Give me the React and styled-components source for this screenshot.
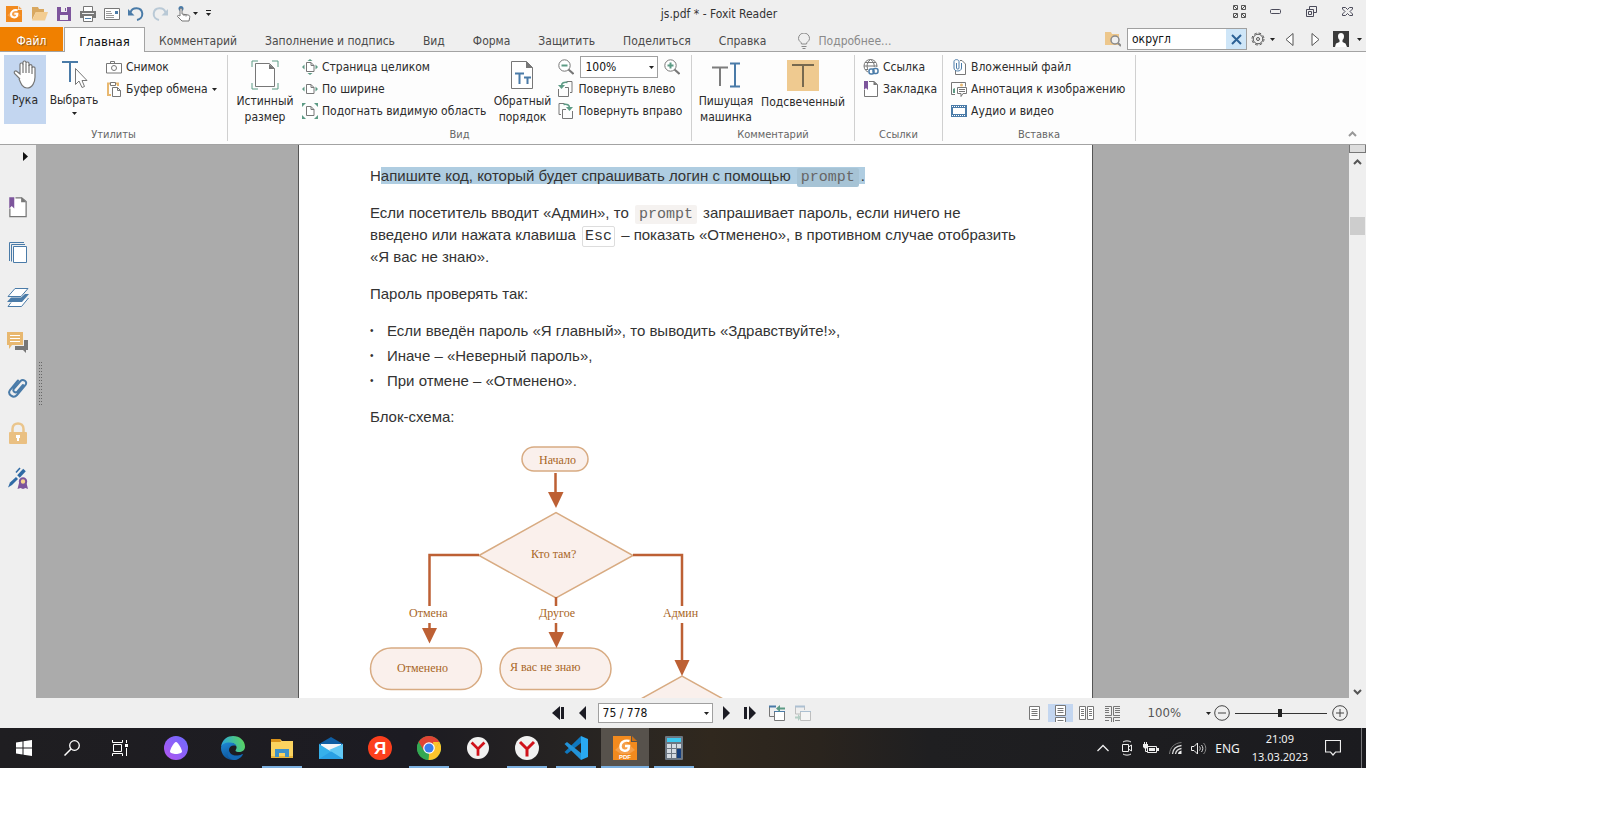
import React from "react";
import styled, { createGlobalStyle } from "styled-components";

const UI = '"DejaVu Sans Condensed", "DejaVu Sans", "Noto Sans", sans-serif';
const GRAY = "#7d7d7d";
const BLUE = "#4a7ba8";
const GREEN = "#5d9b85";
const SAND = "#e8b870";
const PURPLE = "#7d559c";

const Global = createGlobalStyle`
  * { box-sizing: border-box; }
  body { margin: 0; background: #fff; font-family: ${UI}; font-size: 12px; color: #333; }
  button, input, select { font: inherit; color: inherit; margin: 0; }
  button { background: none; border: 0; padding: 0; }
  svg { display: block; flex: none; }
`;

/* ---------- frame ---------- */

const Screen = styled.div`
  display: flex;
  flex-direction: column;
  height: calc(100vh - 64px);
  min-height: 400px;
  margin-right: 234px;
  background: #efefef;
`;

const TitleBar = styled.header`
  display: grid;
  grid-template-columns: 1fr auto 1fr;
  align-items: center;
  height: 27px;
  padding: 0 8px 0 6px;
`;

const QuickAccess = styled.div`
  display: flex;
  align-items: center;
  gap: 8px;
  > svg { margin-right: 2px; }
`;

const Title = styled.h1`
  margin: 0;
  padding-left: 74px;
  font-size: 12px;
  font-weight: 400;
  white-space: nowrap;
`;

const WindowControls = styled.div`
  display: flex;
  justify-content: flex-end;
  gap: 20px;
  padding: 0 3px 4px 0;
`;

const IconButton = styled.button`
  display: flex;
  align-items: center;
  justify-content: center;
  gap: ${(p) => p.$gap || 0}px;
  min-width: ${(p) => p.$w || 16}px;
  height: ${(p) => p.$h || 18}px;
  background: ${(p) => (p.$on ? "#c3d6f0" : "none")};
`;

/* ---------- tabs ---------- */

const TabRow = styled.nav`
  display: flex;
  align-items: stretch;
  height: 25px;
  border-bottom: 1px solid #a3a3a3;
`;

const FileTab = styled.button`
  width: 63px;
  margin-right: 1px;
  padding-top: 3px;
  background: #f08000;
  color: #fff;
  text-shadow: 1px 1px 1px #8a5a20;
`;

const Tab = styled.button`
  padding: 3px 14px 0;
  color: #4a4a4a;
  white-space: nowrap;
  ${(p) =>
    p.$active &&
    `
    width: 81px;
    height: 25px;
    padding: 2px 0 0;
    font-size: 13px;
    color: #111;
    background: #fdfdfd;
    border: 1px solid #a3a3a3;
    border-bottom: 0;
  `}
`;

const TellMe = styled.label`
  display: flex;
  align-items: center;
  gap: 8px;
  margin-left: 18px;
  padding-top: 3px;
  input {
    width: 96px;
    border: 0;
    padding: 0;
    outline: 0;
    background: none;
  }
  input::placeholder { color: #8a8a8a; opacity: 1; }
`;

const TabTools = styled.div`
  display: flex;
  align-items: center;
  gap: 2px;
  margin-left: auto;
  padding: 0 3px 0 0;
`;

const SearchBox = styled.div`
  display: flex;
  width: 120px;
  height: 22px;
  margin-left: 4px;
  border: 1px solid #a0a0a0;
  background: #fff;
  input {
    flex: 1;
    min-width: 0;
    padding: 0 0 0 4px;
    border: 0;
    outline: 0;
    background: none;
    color: #111;
  }
  button {
    display: flex;
    align-items: center;
    justify-content: center;
    width: 20px;
    background: #cfe6f8;
  }
`;

/* ---------- ribbon ---------- */

const Ribbon = styled.section`
  display: flex;
  height: 93px;
  padding-top: 3px;
  background: #fdfdfd;
  border-bottom: 1px solid #a3a3a3;
`;

const Group = styled.div`
  display: flex;
  flex-direction: column;
  width: ${(p) => p.$w}px;
  height: 86px;
  border-right: 1px solid #d0d0d0;
`;

const GroupBody = styled.div`
  display: flex;
  flex: none;
  height: 70px;
  padding-left: ${(p) => p.$pad || 4}px;
`;

const Caption = styled.div`
  padding-top: 1px;
  line-height: 18px;
  text-align: center;
  font-size: 11px;
  color: #666;
`;

const BigButton = styled.button`
  display: flex;
  flex-direction: column;
  align-items: center;
  width: ${(p) => p.$w}px;
  height: 69px;
  padding-top: 5px;
  line-height: 16px;
  background: ${(p) => (p.$on ? "#c3d6f0" : "none")};
  color: #2b2b2b;
  svg:first-child { margin-bottom: 3px; }
  svg + span + svg { margin-top: 4px; }
`;

const Stack = styled.div`
  display: flex;
  flex-direction: column;
  padding-top: 1px;
  margin-left: ${(p) => p.$ml || 0}px;
`;

const SmallButton = styled.button`
  display: flex;
  align-items: center;
  gap: 4px;
  height: 22px;
  color: #2b2b2b;
  white-space: nowrap;
`;

const ZoomRow = styled.div`
  display: flex;
  align-items: center;
  gap: 6px;
  height: 22px;
`;

const SelectWrap = styled.span`
  position: relative;
  display: flex;
  width: ${(p) => p.$w}px;
  height: ${(p) => p.$h}px;
  select {
    appearance: none;
    width: 100%;
    padding: 0 4px;
    border: 1px solid #a0a0a0;
    border-radius: 0;
    background: #fff;
    color: #111;
  }
  svg {
    position: absolute;
    right: 4px;
    top: 50%;
    margin-top: -1px;
    pointer-events: none;
  }
`;

const Collapse = styled(IconButton)`
  align-self: flex-end;
  margin: 0 6px 1px auto;
`;

/* ---------- workspace ---------- */

const Workspace = styled.main`
  display: flex;
  flex: 1;
  min-height: 0;
`;

const SideBar = styled.aside`
  display: flex;
  flex-direction: column;
  width: 36px;
`;

const Expand = styled(IconButton)`
  align-self: flex-end;
  margin: 1px 5px 19px 0;
`;

const Splitter = styled.div`
  display: flex;
  align-items: center;
  width: 6px;
  padding: 0 0 76px 3px;
`;

const Canvas = styled.div`
  display: flex;
  flex: 1;
  min-width: 0;
  overflow: hidden;
  background: #ababab;
`;

const PageArea = styled.div`
  display: flex;
  flex: 1;
  justify-content: center;
  min-width: 0;
`;

const Page = styled.article`
  width: 795px;
  padding: 20px 64px 0 71px;
  border: solid #555;
  border-width: 0 1px;
  background: #fff;
  font-family: "Liberation Sans", Arial, sans-serif;
  font-size: 15px;
  line-height: 22px;
  color: #333;
  p { margin: 0 0 15px; }
`;

const Code = styled.code`
  padding: 1px 4px;
  margin: 0 2px;
  border-radius: 2px;
  background: ${(p) => (p.$marked ? "#a6c3d5" : "#f5f2f0")};
  color: #666;
  font-family: "Liberation Mono", monospace;
  font-size: 15px;
  line-height: 1;
`;

const Key = styled.kbd`
  padding: 1px 2px;
  margin: 0 2px;
  border: 1px solid #ddd;
  border-radius: 2px;
  font-family: "Liberation Mono", monospace;
  font-size: 15px;
  line-height: 1;
`;

const Mark = styled.mark`
  background: #afcde1;
  color: inherit;
`;

const List = styled.ul`
  margin: 0 0 14px;
  padding: 0;
  list-style: none;
  li {
    display: flex;
    gap: 12px;
    margin-bottom: 3px;
    line-height: 22px;
  }
  li::before {
    content: "•";
    width: 5px;
    font-size: 10px;
  }
`;

const ScrollBar = styled.div`
  display: flex;
  flex-direction: column;
  width: 17px;
  background: #efefef;
`;

const SplitBox = styled.button`
  height: 8px;
  border: 1px solid #777;
  border-top: 0;
  background: #ddd;
`;

const Thumb = styled.div`
  height: 18px;
  margin: 46px 1px auto;
  background: #cdcdcd;
`;

/* ---------- status bar ---------- */

const StatusBar = styled.footer`
  display: flex;
  align-items: center;
  justify-content: flex-end;
  height: 30px;
  padding-right: 18px;
`;

const Pager = styled.div`
  display: flex;
  align-items: center;
  gap: 10px;
  margin-right: 211px;
`;

const ViewModes = styled.div`
  display: flex;
  align-items: center;
  gap: 1px;
`;

const ZoomValue = styled.output`
  margin: 0 21px 0 23px;
  font-size: 13px;
  line-height: 18px;
  color: #555;
`;

const Slider = styled.input`
  appearance: none;
  width: 92px;
  height: 12px;
  margin: 0 5px;
  background: linear-gradient(#333, #333) center / 100% 1px no-repeat;
  &::-webkit-slider-thumb {
    appearance: none;
    width: 4px;
    height: 8px;
    background: #222;
  }
`;

/* ---------- taskbar ---------- */

const TaskBar = styled.footer`
  display: flex;
  height: 40px;
  background: linear-gradient(90deg, #1f1e21 0%, #1c1b22 30%, #2a2622 46%, #30281e 52%, #2a241e 60%, #1f1f21 68%, #1b1b1f 100%);
  color: #f2f2f2;
`;

const TaskButton = styled.button`
  display: flex;
  align-items: center;
  justify-content: center;
  width: ${(p) => (p.$active ? 48 : 40)}px;
  margin-right: ${(p) => (p.$active ? 5 : 9)}px;
  margin-left: ${(p) => (p.$active ? -4 : 0)}px;
  border: solid ${(p) => (p.$open ? "#7cb0e0" : "transparent")};
  border-width: 0 0 2px;
  padding-top: 2px;
  background: ${(p) => (p.$active ? "#57524c" : "none")};
  background-clip: padding-box;
`;

const StartGroup = styled.div`
  display: flex;
  margin: 0 8px 0 4px;
  ${TaskButton} { margin-right: 8px; }
`;

const Alice = styled.div`
  display: flex;
  margin-right: 8px;
`;

const Tray = styled.div`
  display: flex;
  align-items: center;
  gap: 8px;
  margin-left: auto;
  padding-right: 4px;
  font-family: "Noto Sans", "Open Sans", sans-serif;
  font-size: 12px;
`;

const Clock = styled.time`
  margin: 0 1px 0 4px;
  text-align: center;
  line-height: 18px;
  font-size: 11px;
`;

const DesktopEdge = styled.div`
  align-self: stretch;
  width: 1px;
  margin-left: 4px;
  background: #77777a;
`;

/* ---------- icons ---------- */

const Svg = ({ w = 16, h, children, ...rest }) => (
  <svg width={w} height={h || w} viewBox={`0 0 ${w} ${h || w}`} fill="none" aria-hidden="true" {...rest}>
    {children}
  </svg>
);

const Caret = (props) => (
  <Svg w={5} h={3} {...props}>
    <path d="M0 0h5L2.500 3z" fill="#222" />
  </Svg>
);

const FoxitIcon = ({ size = 16, pdf }) => (
  <svg width={size} height={size} viewBox="0 0 24 24" fill="none" aria-hidden="true">
    <path d="M0 0h18v6h6v18H0z" fill="#f28a1e" />
    <path d="M19 0l5 5h-5z" fill={pdf ? "#c96f16" : "#f4a351"} />
    <path d="M2 14l10-9 10 9-6 4H8z" fill="#f6a04a" />
    <path d={pdf ? "M16.500 5C11 3.500 7.500 6.500 7.500 10.500c0 4.500 6 5.500 8 2.500l.5-3h-4" : "M17.500 6.500C11 5 7.500 8.500 7.500 12.500c0 5 6.500 6 9 2.500l.5-3.500h-4.500"} stroke="#fff" strokeWidth={pdf ? 2.400 : 3} />
    {pdf && (
      <text x="6" y="22.500" fontSize="6" fontWeight="700" fill="#fff" fontFamily="Liberation Sans, sans-serif">PDF</text>
    )}
  </svg>
);

const FolderIcon = () => (
  <Svg><path d="M0 14V1h6l1 2h5v3H4z" fill="#d9a860" /><path d="M4 6h12l-3 8.500H0z" fill="#f3cd92" /></Svg>
);
const SaveIcon = () => (
  <Svg w={14}><path d="M0 0h14v14H0z" fill={PURPLE} /><path d="M4 0h6v5H4zM3 8h8v5H3z" fill="#efefef" /><path d="M8 1h1v3H8z" fill={PURPLE} /></Svg>
);
const PrintIcon = () => (
  <Svg>
    <path d="M0 5h16v7H0z" fill="#777" />
    <path d="M3.500 5V.5h9V5M3.500 9.500h9v6h-9z" fill="#fff" stroke="#777" />
    <path d="M5 12.500h6" stroke={BLUE} /><path d="M2 7.500h12" stroke="#efefef" />
  </Svg>
);
const MailIcon = () => (
  <Svg w={16} h={12}><path d="M.5.5h15v11H.5z" fill="#fff" stroke="#777" /><path d="M2 3.500h5M2 5.500h6M2 7.500h8M2 9.500h8" stroke="#999" /><path d="M11 3h3v3h-3z" fill={BLUE} /></Svg>
);
const UndoIcon = ({ flip, color }) => (
  <Svg><g transform={flip ? "translate(16 0) scale(-1 1)" : undefined}>
    <path d="M2.500 6.500C4 1 13.500.5 14.300 7.500 14.500 11 12 13.500 9 14" stroke={color} strokeWidth="2" />
    <path d="M0 3v6.500h6.500z" fill={color} />
  </g></Svg>
);
const TouchIcon = () => (
  <Svg><circle cx="5" cy="2.500" r="2.500" fill={BLUE} /><path d="M4 10V3.500c0-1.500 2-1.500 2 0V8l6 1c1.500.3 2 1 1.700 2.500L13 15H6l-4.500-4.500C1 9.500 2.500 9 4 10zM8 8v2M10 8.500v2" fill="#fff" stroke="#777" /></Svg>
);
const OverflowIcon = () => (
  <Svg w={5} h={7}><path d="M0 .5h5" stroke="#222" /><path d="M0 3h5L2.500 6z" fill="#222" /></Svg>
);
const GridWindowIcon = () => (
  <Svg w={13} h={13} stroke="#555">
    <path d="M.5.5h4v4h-4zM8.500.5h4v4h-4zM.5 8.500h4v4h-4zM8.500 8.500h4v4h-4zM1 1l3 3M12 1L9 4M1 12l3-3M12 12L9 9" />
  </Svg>
);
const MinIcon = () => <Svg w={11} h={5}><rect x=".5" y=".5" width="10" height="4" rx="1" stroke="#4b4b5a" /></Svg>;
const RestoreIcon = () => (
  <Svg w={11} h={11} stroke="#4b4b5a"><path d="M3.500 3.500v-3h7v6h-3M.5 3.500h7v7h-7zM2.500 5.500h3v3h-3z" /></Svg>
);
const CloseIcon = () => (
  <Svg w={11} h={9} stroke="#4b4b5a"><path d="M.5.5h3l2 2 2-2h3v1.500L8 4.500l2.500 2.500v1.500h-3l-2-2-2 2h-3V7L3 4.500.5 2z" /></Svg>
);
const BulbIcon = () => (
  <Svg w={12} h={16} stroke="#888"><path d="M3.500 11C3.500 8.500.500 8.500.500 5.500a5.300 5.300 0 0 1 11 0c0 3-3 3-3 5.500zM3.500 13.500h5M4.500 15.500h3" /></Svg>
);
const FolderSearchIcon = () => (
  <Svg><path d="M0 1h6l1 2h7v11H0z" fill="#edc78c" /><circle cx="10" cy="9" r="4" fill="#efefef" stroke="#8a8a8a" strokeWidth="1.500" /><path d="M13 12l3 3" stroke="#8a8a8a" strokeWidth="2" /></Svg>
);
const GearIcon = () => (
  <Svg w={14} stroke="#555"><circle cx="7" cy="7" r="6" strokeDasharray="2.700 2" /><circle cx="7" cy="7" r="4.800" /><circle cx="7" cy="7" r="1.500" /></Svg>
);
const TriOutline = ({ flip }) => (
  <Svg w={9} h={13}><path d={flip ? "M1 .5v12l7-6z" : "M8 .5v12l-7-6z"} stroke="#555" fill="#fff" /></Svg>
);
const AvatarIcon = () => (
  <Svg><path d="M0 0h16v16H0z" fill="#3b3b3b" /><path d="M5 5c0-4 6-4 6 0 0 2-.5 3-1.500 4v2l3 1.500L14 16H2l1-3.500L6.500 11V9C5.500 8 5 7 5 5z" fill="#fff" /></Svg>
);

const HandIcon = () => (
  <Svg w={26} h={29}>
    <path d="M8 19L2.500 13.500c-1-2 1-3.500 2.500-2L8 14V4.500c0-2 3-2 3 0V2.500c0-2 3-2 3 0v1c0-2 3-2 3 0V6c0-1.800 3-1.800 3 0v2c0-1.500 3-1.500 3 0v9c0 5-2.500 11-8 11-4.500 0-6-4-8-9" fill="#fff" stroke="#777" strokeWidth="1.200" />
    <path d="M11 4v9M14 3.500V13M17 5v8M20 7.500V14" stroke="#777" strokeWidth="1.200" />
  </Svg>
);
const SelectTextIcon = () => (
  <Svg w={28} h={29}><path d="M2 2h16M10 2v20" stroke={BLUE} strokeWidth="2" /><path d="M15.500 8.500v16l3.500-3.500 3 6.500 2.500-1-2.500-6h5z" fill="#fff" stroke="#777" /></Svg>
);
const CameraIcon = () => (
  <Svg w={16} h={13}><path d="M4.500 2.500V.5h4v2M.5 2.500h15v9.500H.5z" fill="#fff" stroke="#777" /><circle cx="8" cy="7" r="2.500" stroke="#777" /></Svg>
);
const PasteIcon = () => (
  <Svg><path d="M5 14H2V2.500h10V5" stroke={SAND} strokeWidth="2" /><path d="M4.500 1.500h5v3h-5z" fill="#fff" stroke="#777" /><path d="M6.500 6.500h5l3 3v6h-8zM11.500 6.500v3h3" fill="#fff" stroke="#777" /></Svg>
);
const RealSizeIcon = () => (
  <Svg w={28} h={30}>
    <path d="M1 7V1h6M21 1h6v6M27 23v6h-6M7 29H1v-6" stroke={GREEN} />
    <path d="M4.500 3.500h14l5 5v18h-19z" fill="#fff" stroke="#777" /><path d="M18 4v5h6z" fill="#777" />
  </Svg>
);
const FitIcon = ({ kind }) => (
  <Svg>
    <path d="M4.500 3.500h4.500l3 3v6H4.500zM9 3.500v3h3" fill="#fff" stroke="#777" />
    {kind !== "all" && <path d="M2.500 5.500v5L0 8zM13.500 5.500v5L16 8z" fill={GREEN} />}
    {kind === "page" && <path d="M5.500 2h5L8 0zM5.500 14h5L8 16z" fill={GREEN} />}
    {kind === "all" && <path d="M0 0h4L0 4zM16 0v4l-4-4zM16 16h-4l4-4zM0 16v-4l4 4z" fill={GREEN} />}
  </Svg>
);
const ReflowIcon = () => (
  <Svg w={24} h={30}>
    <path d="M1.500 1.500h15l6 6v21h-21z" fill="#fff" stroke="#777" /><path d="M16 1v7h7z" fill="#777" />
    <path d="M5 13.500h9M9.500 13v11M14 17.500h7M17.500 17v7" stroke={BLUE} strokeWidth="2" />
  </Svg>
);
const ZoomIcon = ({ plus }) => (
  <Svg><circle cx="6.500" cy="6.500" r="5.700" fill="#fff" stroke="#777" /><path d={plus ? "M3.500 6.500h6M6.500 3.500v6" : "M3.500 6.500h6"} stroke={GREEN} strokeWidth="2" /><path d="M10.500 10.500l5 4.500" stroke="#777" strokeWidth="2" /></Svg>
);
const RotateIcon = ({ flip }) => (
  <Svg w={16} h={16}><g transform={flip ? "translate(15 0) scale(-1 1)" : undefined}>
    <path d="M8.500.5h5.500v11h-2M.5 8v7.500h10v-9H7" stroke="#777" />
    <path d="M9.500 1.500C6 .5 3.500 2 3.500 5" stroke={GREEN} strokeWidth="1.500" /><path d="M0 4h7L3.500 8z" fill={GREEN} />
  </g></Svg>
);
const TypewriterIcon = () => (
  <Svg w={28} h={30}><path d="M0 7.500h16M8 8v18" stroke={GRAY} strokeWidth="2" /><path d="M18 3.500h10M18 26.500h10M23 3v23" stroke={BLUE} strokeWidth="2" /></Svg>
);
const HighlightIcon = () => (
  <Svg w={32} h={31}><path d="M0 0h32v31H0z" fill="#efca90" /><path d="M5 5h22M16 5v22" stroke="#77694f" strokeWidth="2" /></Svg>
);
const LinkIcon = () => (
  <Svg>
    <circle cx="7.500" cy="7" r="6.500" stroke="#777" /><path d="M1 7h13M2 3.500h11M2 10.500h6M7.500.5c-5 4-4 10 0 13M7.500.5c4 3 4 6 3.500 9" stroke="#777" />
    <path d="M5 8h11v8H5z" fill="#fdfdfd" /><rect x="6" y="10" width="5" height="5" rx="2" stroke={BLUE} strokeWidth="1.500" /><rect x="10" y="9.500" width="5" height="5" rx="2" stroke={BLUE} strokeWidth="1.500" />
  </Svg>
);
const BookmarkIcon = ({ w = 16 }) => (
  <svg width={w} height={w * 1.125} viewBox="0 0 16 18" fill="none" aria-hidden="true">
    <path d="M1.500 10v6.500h13V4.500L11 1.500H6" fill="#fff" stroke="#777" /><path d="M10.500 1v4h4z" fill="#777" />
    <path d="M1 1h4v9L3 8l-2 2z" fill={PURPLE} />
  </svg>
);
const AttachIcon = () => (
  <Svg><path d="M9 1.500h2l3.500 3.500v10.500h-10V11" fill="#fff" stroke="#777" /><path d="M5.500 4v5c0 1.500 2.500 1.500 2.500 0V2.500c0-2.500-5-2.500-5 0V9c0 4 7.500 4 7.500 0V4" stroke={BLUE} /></Svg>
);
const ImageNoteIcon = () => (
  <Svg><path d="M.5 13.500V1.500h14v4M.5 13.500H4" stroke="#777" /><path d="M2 12V8l2-1v5z" fill={GREEN} /><circle cx="10.500" cy="4" r="1.500" fill={SAND} /><path d="M6.500 6.500h9v6H12l-2 3v-3H6.500zM8 8.500h6M8 10.500h6" fill="#fff" stroke="#777" /></Svg>
);
const FilmIcon = () => (
  <Svg w={16} h={12}><path d="M0 0h16v12H0z" fill={BLUE} /><path d="M2 3h12v6H2z" fill="#fff" /><path d="M1 1.500h14M1 10.500h14" stroke="#fff" strokeDasharray="1 1" /></Svg>
);
const ChevronUp = ({ color = "#999", flip }) => (
  <Svg w={9} h={6}><path d={flip ? "M1 1l3.500 3.500L8 1" : "M1 5l3.500-3.500L8 5"} stroke={color} strokeWidth="2" /></Svg>
);

const PagesIcon = () => (
  <Svg w={18} h={21} stroke={BLUE}><path d="M.5 19V.5H15M2.500 19.500v-17H16" /><path d="M4.500 4.500h13v16h-13z" fill="#fff" /></Svg>
);
const LayersIcon = () => (
  <Svg w={22} h={19}><path d="M4 14.500L1 18.500h13.500L21.500 10" fill="#fff" stroke={BLUE} /><path d="M4 9.500h10L18 6h4l-7 8H0z" fill={BLUE} /><path d="M8 .5h13L14 8.500H1z" fill="#fff" stroke={BLUE} /></Svg>
);
const CommentsIcon = () => (
  <Svg w={22} h={21}><path d="M17 8h4v10h-2v3l-3-3H8v-4h9z" fill="#777" /><path d="M0 0h16v13H5l-3 4v-4H0z" fill={SAND} /><path d="M3 3.500h10M3 6.500h10M3 9.500h10" stroke="#fff" /></Svg>
);
const ClipIcon = () => (
  <Svg w={20} h={21}><path d="M6 11.500L12.500 4C15 1.500 20 4.500 17.500 8L9 18c-3.500 4-10-.5-7-5L10 3.500M6 11.500c-2 3 1.500 5 3.500 3L15 8" stroke={BLUE} strokeWidth="2" strokeLinecap="round" /></Svg>
);
const LockIcon = () => (
  <Svg w={18} h={22}><path d="M3.500 11V7c0-7.500 11-7.500 11 0v4" stroke="#eac58c" strokeWidth="2.500" /><rect y="10" width="18" height="12" rx="1" fill="#eac082" /><path d="M7 13h4v3h-1v3H8v-3H7z" fill="#fff" /></Svg>
);
const SignIcon = () => (
  <Svg w={20} h={22}>
    <path d="M0 20.500l2-5 6-5.500 2 2-6 6z" fill="#2f6aa5" /><path d="M10.500 9.500l6-6.500" stroke="#2f6aa5" strokeWidth="3.500" /><path d="M8 5.500l4-4.500" stroke="#2f6aa5" strokeWidth="1.500" />
    <path d="M11 16l-1.500 6 3-1 2.500 1 2.500-1 2.500 1-1.500-6z" fill={PURPLE} /><circle cx="15" cy="14.500" r="3.200" fill="#f7d58c" stroke={PURPLE} strokeWidth="2" />
  </Svg>
);
const GripDots = () => (
  <Svg w={3} h={44} stroke="#666"><path d="M.5 0v44M2.500 0v44" strokeDasharray="1 2" /></Svg>
);

const Nav = ({ kind }) => {
  const w = kind === "prev" || kind === "next" ? 10 : 14;
  return (
    <Svg w={w} h={14} fill="#1c1c24">
      {kind === "first" && <path d="M9 0v14L1 7zM10 1h3v12h-3z" />}
      {kind === "prev" && <path d="M8 0v14L1 7z" />}
      {kind === "next" && <path d="M0 0v14l7-7z" />}
      {kind === "last" && <path d="M0 1h3v12H0zM5 0v14l7-7z" />}
    </Svg>
  );
};
const HistoryIcon = ({ back }) => (
  <Svg opacity={back ? 1 : 0.4}>
    <path d={back ? "M5 11.500H.5V1.500H7" : "M5 9H.5V1.500h9V5"} stroke="#777" /><path d={back ? "M0 1.500h7" : "M0 1.500h10"} stroke={BLUE} strokeWidth="2" />
    <path d="M5.500 6.500h10v9h-10z" fill="#fff" stroke="#777" /><path d="M5 6.500h11" stroke={BLUE} />
    <path d={back ? "M7 3.500L11 0v2.500h5v2h-5V7z" : "M6 12.500L3 9v2.500H0v2h3V16z"} fill={GREEN} />
  </Svg>
);
const ModeIcon = ({ kind }) => (
  <Svg w={kind > 2 ? 15 : 11} h={kind % 2 === 1 ? 14 : 17} stroke="#777">
    {kind === 1 && <path d="M.5.5h10v13H.5zM2.500 3.500h6M2.500 5.500h6M2.500 7.500h6M2.500 9.500h6" fill="#fff" />}
    {kind === 2 && <path d="M.5.5h10v10H.5zM2.500 3.500h6M2.500 5.500h6M2.500 7.500h6M.5 17v-4.500h10V17M2.500 15.500h6" fill="#fff" />}
    {kind === 3 && <path d="M.5.5h6v13h-6zM8.500.5h6v13h-6zM2 3.500h3M2 5.500h3M2 7.500h3M2 9.500h3M10 3.500h3M10 5.500h3M10 7.500h3M10 9.500h3" fill="#fff" />}
    {kind === 4 && <path d="M0 1.500h6.500v9H0M15 1.500H8.500v9H15M0 3.500h4M0 5.500h4M0 7.500h4M10 3.500h5M10 5.500h5M10 7.500h5M0 12.500h6.500V17M15 12.500H8.500V17M0 15.500h4M10 15.500h5" />}
  </Svg>
);
const RoundIcon = ({ plus }) => (
  <Svg><circle cx="8" cy="8" r="7.300" stroke="#444" /><path d={plus ? "M4 8h8M8 4v8" : "M4 8h8"} stroke="#444" /></Svg>
);

const WindowsIcon = () => <Svg><path d="M0 2.500L6.500 1.500V7.500H0zM7.500 1.300L16 0v7.500H7.500zM0 8.500h6.500v6L0 13.500zM7.500 8.500H16V16l-8.500-1.300z" fill="#fff" /></Svg>;
const LensIcon = () => <Svg stroke="#fff"><circle cx="10.500" cy="5.500" r="4.800" strokeWidth="1.300" /><path d="M7 9L.5 15.500" strokeWidth="1.500" /></Svg>;
const TaskViewIcon = () => (
  <Svg stroke="#fff"><path d="M.5 0v2.500h10V0M1.500 4.500h8v7h-8zM.5 16v-2.500h10V16M14.500 0v3M14.500 8v8" /><path d="M13 4h3v3h-3z" fill="#fff" stroke="none" /></Svg>
);
const AliceIcon = () => (
  <Svg w={24}>
    <defs><linearGradient id="alice" x1="1" y1="0" x2="0" y2="1"><stop stopColor="#6a6bff" /><stop offset="1" stopColor="#b455f0" /></linearGradient></defs>
    <circle cx="12" cy="12" r="12" fill="url(#alice)" /><path d="M12 6c2 0 6 7.500 6 9.500 0 3.300-12 3.300-12 0C6 13.500 10 6 12 6z" fill="#fff" />
  </Svg>
);
const EdgeIcon = () => (
  <Svg w={24}>
    <defs>
      <linearGradient id="edgeA" x1="0" y1="0.500" x2="1" y2="0.300"><stop stopColor="#2aa5e0" /><stop offset="1" stopColor="#5bd65c" /></linearGradient>
      <linearGradient id="edgeB" x1="0" y1="0" x2="0.500" y2="1"><stop stopColor="#1f8ad8" /><stop offset="1" stopColor="#0c4f93" /></linearGradient>
    </defs>
    <path d="M0 11C1 3 7 0 12 0c7 0 12 5 12 10.500 0 4-3 5.500-6 5.500-3.500 0-4-1.500-3-2.500 2-3-1-6.500-5.500-6.500C5 7 1 9 0 11z" fill="url(#edgeA)" />
    <path d="M0 12c0-3.500 4-5.500 8.500-5.500 4 0 6 1.500 7 3.500C11 8.500 8 11 8 14c0 4.500 6 7.500 14 4-2 4-6 6-10 6C5 24 0 18.500 0 12z" fill="url(#edgeB)" />
    <path d="M8 14c0 5 6 8 14 4-2 4-6 6-9 6-6-1-8-6-5-10z" fill="#1468b4" />
  </Svg>
);
const ExplorerIcon = () => (
  <Svg w={22} h={19}><path d="M0 0h9l2 2h11v17H0z" fill="#fbd35f" /><path d="M0 0h9l1 3H0z" fill="#d9921a" /><path d="M0 17h22v2H0z" fill="#e9b53a" /><path d="M4 10h14v8h-4v-4H8v4H4z" fill="#3f92c8" /></Svg>
);
const MailAppIcon = () => (
  <Svg w={24} h={22}><path d="M0 7l12-7 12 7v4H0z" fill="#0f5ea3" /><path d="M2 7h20v8H2z" fill="#f4f6f8" /><path d="M0 7l12 7.500L24 7v15H0z" fill="#36b0ea" /><path d="M24 7v15L10 13z" fill="#62c9f5" /><path d="M12 14.500L24 22H0z" fill="#2aa0e4" /></Svg>
);
const YandexIcon = () => (
  <Svg w={24}><circle cx="12" cy="12" r="12" fill="#fc3f1d" /><text x="12" y="18" textAnchor="middle" fontSize="17" fontWeight="700" fill="#fff" fontFamily="Liberation Sans, sans-serif">Я</text></Svg>
);
const ChromeIcon = () => (
  <Svg w={24}>
    <circle cx="12" cy="12" r="12" fill="#34a853" />
    <path d="M12 12L1.600 6A12 12 0 0 1 22.400 6z" fill="#e04434" /><path d="M12 12l10.400-6A12 12 0 0 1 11.500 24z" fill="#fbc52c" />
    <path d="M12 6h10.400L17 14zM1.600 6l5.200 9L12 6z" fill="#e04434" /><path d="M17.200 15l-5.700 9L22.400 6H16z" fill="#fbc52c" /><path d="M1.600 6L7 15l5 3-1 6A12 12 0 0 1 1.600 6z" fill="#34a853" />
    <circle cx="12" cy="12" r="5.800" fill="#fff" /><circle cx="12" cy="12" r="4.600" fill="#3b7ded" />
  </Svg>
);
const YaBrowserIcon = ({ size = 22 }) => (
  <svg width={size} height={size} viewBox="0 0 24 24" fill="none" aria-hidden="true"><circle cx="12" cy="12" r="12" fill="#f1f1f1" /><path d="M5 6l7 7 7-7M12 12.500V20.500" stroke="#d0121b" strokeWidth="3" /></svg>
);
const CodeIcon = () => (
  <Svg w={24}><path d="M17 0l7 3v18l-7 3z" fill="#29a9f2" /><path d="M17 0v7L3 18l-2.500-2z" fill="#0f78bf" /><path d="M17 24v-7L3 6 .5 8z" fill="#2393d8" /></Svg>
);
const CalcIcon = () => (
  <Svg w={18} h={24}>
    <rect width="18" height="24" rx="1" fill="#6c7681" /><path d="M2 2h14v4H2z" fill="#3fc8ee" />
    <path d="M2 8h4v4H2zM7 8h4v4H7zM12 8h4v4h-4zM2 13h4v4H2zM7 13h4v4H7zM2 18h4v4H2zM7 18h4v4H7z" fill="#d5dbe2" /><path d="M12 13h4v9h-4z" fill="#163f7e" />
  </Svg>
);

const TrayUp = () => <Svg w={12} h={8}><path d="M.5 7L6 1.500 11.500 7" stroke="#eee" strokeWidth="1.300" /></Svg>;
const MeetIcon = () => <Svg w={12} h={16} stroke="#eee"><path d="M1.500 4.500h6v7h-6zM7.500 7l3-2v6l-3-2zM2 2c2-1.500 6-1.500 8 0M2 14c2 1.500 6 1.500 8 0" /></Svg>;
const BatteryIcon = () => (
  <Svg w={16} h={12}><path d="M4.500 4.500h9v6h-9z" stroke="#eee" /><path d="M6 6h6v3H6zM14 6h2v3h-2zM0 2h5v3L3.500 6.500h-2L0 5zM1 0h1v2H1zM3 0h1v2H3z" fill="#eee" /><path d="M2.500 6v3.500h2" stroke="#eee" /></Svg>
);
const WifiIcon = () => (
  <Svg w={13} h={13}><path d="M.5 12C1 5.500 5.500 1 12.500.5" stroke="#777" /><path d="M3.500 12c.5-5 4-8 9-8.500M6.500 12c.5-3 2.500-5 6-5.500" stroke="#ddd" strokeWidth="1.300" /><path d="M9 12c0-2 1.500-3 3.500-3.500V12z" fill="#eee" /></Svg>
);
const VolumeIcon = () => (
  <Svg w={16} h={13}><path d="M.5 4.500h2.500L6.500 1v11L3 8.500H.5z" stroke="#eee" /><path d="M8.500 4.500c1 1.300 1 2.700 0 4M10.500 3c1.800 2 1.800 5 0 7" stroke="#ddd" /><path d="M12.500 1c3 3 3 8 0 11" stroke="#888" /></Svg>
);
const NoticeIcon = () => <Svg w={16} h={16}><path d="M.5.5h15v11.500h-5l-2.500 3-2.500-3h-5z" stroke="#eee" strokeWidth="1.200" /></Svg>;

/* ---------- flowchart ---------- */

const Chart = styled.svg`
  margin: -7px 0 0 -1px;
  .shape { fill: #faf0ec; stroke: #d8ab82; stroke-width: 1.5; }
  .line { stroke: #bd6034; stroke-width: 2.5; }
  .head { fill: #bd6034; }
  text { font: 12px "Liberation Serif", "Times New Roman", serif; fill: #a8661f; }
`;

const Flowchart = () => (
  <Chart width="400" height="330" viewBox="0 0 400 330" fill="none" role="img" aria-label="Блок-схема">
    <rect className="shape" x="153" y="11" width="66" height="24" rx="12" />
    <path className="shape" d="M110 119.500L187 76.500l77 43L187 162z" />
    <rect className="shape" x="1.500" y="212" width="111" height="41.500" rx="20.700" />
    <rect className="shape" x="131" y="212" width="111" height="41.500" rx="20.700" />
    <path className="shape" d="M236 283l77-43 77 43-77 43z" />
    <path className="line" d="M186.500 37v20M110 119H60.500v51M60.500 187v7M264 119h49v51M313 187v39M187 161v9M187 187v11" />
    <path className="head" d="M179 56h15.500l-7.500 16zM53 192h15l-7.500 15.500zM305.500 224h15L313 240zM179.500 196h15.500l-7.500 16z" />
    <text x="170" y="28">Начало</text>
    <text x="162" y="122">Кто там?</text>
    <text x="40" y="181">Отмена</text>
    <text x="170" y="181">Другое</text>
    <text x="294" y="181">Админ</text>
    <text x="28" y="236">Отменено</text>
    <text x="141" y="235">Я вас не знаю</text>
  </Chart>
);

/* ---------- sections ---------- */

const tabs = ["Комментарий", "Заполнение и подпись", "Вид", "Форма", "Защитить", "Поделиться", "Справка"];

const sideIcons = [
  ["Закладки", <BookmarkIcon w={20} />],
  ["Страницы", <PagesIcon />],
  ["Слои", <LayersIcon />],
  ["Комментарии", <CommentsIcon />],
  ["Вложения", <ClipIcon />],
  ["Защита", <LockIcon />],
  ["Подписи", <SignIcon />],
];

const Small = ({ icon, children, caret }) => (
  <SmallButton type="button">
    {icon}
    <span>{children}</span>
    {caret && <Caret />}
  </SmallButton>
);

const tasks = [
  { label: "Edge", icon: <EdgeIcon /> },
  { label: "Проводник", icon: <ExplorerIcon />, open: true },
  { label: "Почта", icon: <MailAppIcon /> },
  { label: "Яндекс", icon: <YandexIcon /> },
  { label: "Chrome", icon: <ChromeIcon />, open: true },
  { label: "Яндекс Браузер", icon: <YaBrowserIcon /> },
  { label: "Яндекс Браузер, окно", icon: <YaBrowserIcon size={24} />, open: true },
  { label: "VS Code", icon: <CodeIcon />, open: true },
  { label: "Foxit Reader", icon: <FoxitIcon size={24} pdf />, open: true, active: true },
  { label: "Калькулятор", icon: <CalcIcon />, open: true },
];

export default function App() {
  return (
    <>
      <Global />
      <Screen>
        <TitleBar>
          <QuickAccess>
            <FoxitIcon />
            <IconButton aria-label="Открыть"><FolderIcon /></IconButton>
            <IconButton aria-label="Сохранить"><SaveIcon /></IconButton>
            <IconButton aria-label="Печать"><PrintIcon /></IconButton>
            <IconButton aria-label="Письмо"><MailIcon /></IconButton>
            <IconButton aria-label="Отменить"><UndoIcon color={BLUE} /></IconButton>
            <IconButton aria-label="Вернуть"><UndoIcon flip color="#b9c9d6" /></IconButton>
            <IconButton aria-label="Режим касания" $gap={1}><TouchIcon /><Caret /></IconButton>
            <IconButton aria-label="Настроить панель" $w={5}><OverflowIcon /></IconButton>
          </QuickAccess>
          <Title>js.pdf * - Foxit Reader</Title>
          <WindowControls>
            <IconButton aria-label="Полный экран"><GridWindowIcon /></IconButton>
            <IconButton aria-label="Свернуть"><MinIcon /></IconButton>
            <IconButton aria-label="Восстановить"><RestoreIcon /></IconButton>
            <IconButton aria-label="Закрыть"><CloseIcon /></IconButton>
          </WindowControls>
        </TitleBar>

        <TabRow>
          <FileTab type="button">Файл</FileTab>
          <Tab type="button" $active>Главная</Tab>
          {tabs.map((t) => <Tab type="button" key={t}>{t}</Tab>)}
          <TellMe>
            <BulbIcon />
            <input placeholder="Подробнее..." aria-label="Подробнее" />
          </TellMe>
          <TabTools>
            <IconButton aria-label="Поиск в папке"><FolderSearchIcon /></IconButton>
            <SearchBox>
              <input defaultValue="округл" aria-label="Поиск" />
              <button type="button" aria-label="Очистить">
                <Svg w={11} h={11}><path d="M1 1l9 9M10 1l-9 9" stroke="#2d6296" strokeWidth="2" /></Svg>
              </button>
            </SearchBox>
            <IconButton aria-label="Параметры" $w={28} $gap={5}><GearIcon /><Caret /></IconButton>
            <IconButton aria-label="Назад" $w={20}><TriOutline /></IconButton>
            <IconButton aria-label="Вперёд" $w={28}><TriOutline flip /></IconButton>
            <IconButton aria-label="Профиль" $w={32} $gap={8}><AvatarIcon /><Caret /></IconButton>
          </TabTools>
        </TabRow>

        <Ribbon>
          <Group $w={228}>
            <GroupBody>
              <BigButton type="button" $w={42} $on><HandIcon />Рука</BigButton>
              <BigButton type="button" $w={56}><SelectTextIcon /><span>Выбрать</span><Caret /></BigButton>
              <Stack $ml={4}>
                <Small icon={<CameraIcon />}>Снимок</Small>
                <Small icon={<PasteIcon />} caret>Буфер обмена</Small>
              </Stack>
            </GroupBody>
            <Caption>Утилиты</Caption>
          </Group>
          <Group $w={464}>
            <GroupBody>
              <BigButton type="button" $w={66}><RealSizeIcon />Истинный размер</BigButton>
              <Stack $ml={4}>
                <Small icon={<FitIcon kind="page" />}>Страница целиком</Small>
                <Small icon={<FitIcon />}>По ширине</Small>
                <Small icon={<FitIcon kind="all" />}>Подогнать видимую область</Small>
              </Stack>
              <BigButton type="button" $w={72}><ReflowIcon />Обратный порядок</BigButton>
              <Stack>
                <ZoomRow>
                  <IconButton aria-label="Уменьшить"><ZoomIcon /></IconButton>
                  <SelectWrap $w={78} $h={22}>
                    <select aria-label="Масштаб"><option>100%</option></select>
                    <Caret />
                  </SelectWrap>
                  <IconButton aria-label="Увеличить"><ZoomIcon plus /></IconButton>
                </ZoomRow>
                <Small icon={<RotateIcon />}>Повернуть влево</Small>
                <Small icon={<RotateIcon flip />}>Повернуть вправо</Small>
              </Stack>
            </GroupBody>
            <Caption>Вид</Caption>
          </Group>
          <Group $w={163}>
            <GroupBody>
              <BigButton type="button" $w={60}><TypewriterIcon />Пишущая машинка</BigButton>
              <BigButton type="button" $w={94}><HighlightIcon />Подсвеченный</BigButton>
            </GroupBody>
            <Caption>Комментарий</Caption>
          </Group>
          <Group $w={88}>
            <GroupBody $pad={8}>
              <Stack>
                <Small icon={<LinkIcon />}>Ссылка</Small>
                <Small icon={<BookmarkIcon />}>Закладка</Small>
              </Stack>
            </GroupBody>
            <Caption>Ссылки</Caption>
          </Group>
          <Group $w={193}>
            <GroupBody $pad={8}>
              <Stack>
                <Small icon={<AttachIcon />}>Вложенный файл</Small>
                <Small icon={<ImageNoteIcon />}>Аннотация к изображению</Small>
                <Small icon={<FilmIcon />}>Аудио и видео</Small>
              </Stack>
            </GroupBody>
            <Caption>Вставка</Caption>
          </Group>
          <Collapse aria-label="Свернуть ленту"><ChevronUp /></Collapse>
        </Ribbon>

        <Workspace>
          <SideBar>
            <Expand aria-label="Развернуть панель" $w={12} $h={20}>
              <Svg w={5} h={9}><path d="M0 0l5 4.500L0 9z" fill="#111" /></Svg>
            </Expand>
            {sideIcons.map(([label, icon]) => (
              <IconButton key={label} aria-label={label} $h={45}>{icon}</IconButton>
            ))}
          </SideBar>
          <Canvas>
            <Splitter><GripDots /></Splitter>
            <PageArea>
              <Page>
                <p>Н<Mark>апишите код, который будет спрашивать логин с помощью <Code $marked>prompt</Code>.</Mark></p>
                <p>
                  Если посетитель вводит «Админ», то <Code>prompt</Code> запрашивает пароль, если ничего не<br />
                  введено или нажата клавиша <Key>Esc</Key> – показать «Отменено», в противном случае отобразить<br />
                  «Я вас не знаю».
                </p>
                <p>Пароль проверять так:</p>
                <List>
                  <li>Если введён пароль «Я главный», то выводить «Здравствуйте!»,</li>
                  <li>Иначе – «Неверный пароль»,</li>
                  <li>При отмене – «Отменено».</li>
                </List>
                <p>Блок-схема:</p>
                <Flowchart />
              </Page>
            </PageArea>
          </Canvas>
          <ScrollBar>
            <SplitBox aria-label="Разделить" />
            <IconButton aria-label="Вверх"><ChevronUp color="#555" /></IconButton>
            <Thumb />
            <IconButton aria-label="Вниз" $h={12}><ChevronUp color="#555" flip /></IconButton>
          </ScrollBar>
        </Workspace>

        <StatusBar>
          <Pager>
            <IconButton aria-label="Первая" $w={20}><Nav kind="first" /></IconButton>
            <IconButton aria-label="Предыдущая" $w={10}><Nav kind="prev" /></IconButton>
            <SelectWrap $w={115} $h={20}>
              <select aria-label="Страница"><option>75 / 778</option></select>
              <Caret />
            </SelectWrap>
            <IconButton aria-label="Следующая" $w={10}><Nav kind="next" /></IconButton>
            <IconButton aria-label="Последняя"><Nav kind="last" /></IconButton>
            <IconButton aria-label="Предыдущий вид"><HistoryIcon back /></IconButton>
            <IconButton aria-label="Следующий вид"><HistoryIcon /></IconButton>
          </Pager>
          <ViewModes>
            {[1, 2, 3, 4].map((k) => (
              <IconButton key={k} aria-label={`Режим ${k}`} $w={25} $on={k === 2}><ModeIcon kind={k} /></IconButton>
            ))}
          </ViewModes>
          <ZoomValue>100%</ZoomValue>
          <IconButton aria-label="Выбор масштаба" $w={12}><Caret /></IconButton>
          <IconButton aria-label="Мельче"><RoundIcon /></IconButton>
          <Slider type="range" aria-label="Масштаб страницы" defaultValue="49" />
          <IconButton aria-label="Крупнее"><RoundIcon plus /></IconButton>
        </StatusBar>

        <TaskBar>
          <StartGroup>
            <TaskButton aria-label="Пуск"><WindowsIcon /></TaskButton>
            <TaskButton aria-label="Поиск Windows"><LensIcon /></TaskButton>
            <TaskButton aria-label="Представление задач"><TaskViewIcon /></TaskButton>
          </StartGroup>
          <Alice><TaskButton aria-label="Алиса"><AliceIcon /></TaskButton></Alice>
          {tasks.map((t) => (
            <TaskButton key={t.label} aria-label={t.label} $open={t.open} $active={t.active}>{t.icon}</TaskButton>
          ))}
          <Tray>
            <IconButton aria-label="Скрытые значки"><TrayUp /></IconButton>
            <IconButton aria-label="Собрание"><MeetIcon /></IconButton>
            <IconButton aria-label="Батарея"><BatteryIcon /></IconButton>
            <IconButton aria-label="Сеть"><WifiIcon /></IconButton>
            <IconButton aria-label="Громкость"><VolumeIcon /></IconButton>
            <span>ENG</span>
            <Clock>21:09<br />13.03.2023</Clock>
            <IconButton aria-label="Уведомления" $w={32}><NoticeIcon /></IconButton>
            <DesktopEdge />
          </Tray>
        </TaskBar>
      </Screen>
    </>
  );
}
